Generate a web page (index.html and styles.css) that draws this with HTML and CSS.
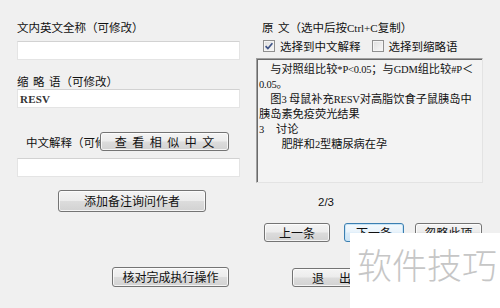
FILE: index.html
```html
<!DOCTYPE html>
<html>
<head>
<meta charset="utf-8">
<link rel="stylesheet" href="styles.css">
</head>
<body>
<div class="dialog">
  <div class="left">
    <div class="lbl lbl1">文内英文全称（可修改）</div>
    <div class="inp inp1"></div>
    <div class="lbl lbl2"><span class="gap">缩</span><span class="gap">略</span>语（可修改）</div>
    <div class="inp inp2"><span class="resv">RESV</span></div>
    <div class="row3">
      <div class="lbl lbl3">中文解释（可修改）</div>
      <button class="btn btn-similar"><span class="spaced">查看相似中文</span></button>
    </div>
    <div class="inp inp3"></div>
    <button class="btn btn-add">添加备注询问作者</button>
    <button class="btn btn-check">核对完成执行操作</button>
  </div>
  <div class="right">
    <div class="lbl title"><span class="gap">原</span>文（选中后按<span class="lat">Ctrl+C</span>复制）</div>
    <div class="checks">
      <span class="cb checked"><svg width="10" height="10" viewBox="0 0 10 10"><path d="M1.6 5.2 L3.9 7.6 L8.4 2.2" fill="none" stroke="#3f5487" stroke-width="1.7"/></svg></span>
      <span class="cbl">选择到中文解释</span>
      <span class="cb cb2"></span>
      <span class="cbl">选择到缩略语</span>
    </div>
    <div class="source">
      <div class="ln">　与对照组比较<span class="a">*P&lt;0.05</span>；与<span class="a">GDM</span>组比较<span class="a">#P</span>＜</div>
      <div class="ln"><span class="a">0.05</span>。</div>
      <div class="ln">　图<span class="a">3 </span>母鼠补充<span class="a">RESV</span>对高脂饮食子鼠胰岛中</div>
      <div class="ln">胰岛素免疫荧光结果</div>
      <div class="ln"><span class="a">3</span><span class="ind3"></span>讨论</div>
      <div class="ln">　　肥胖和<span class="a">2</span>型糖尿病在孕</div>
    </div>
    <div class="count">2/3</div>
    <div class="navrow">
      <button class="btn btn-prev">上一条</button>
      <button class="btn btn-next focus">下一条</button>
      <button class="btn btn-skip">忽略此项</button>
    </div>
    <button class="btn btn-exit"><span class="exitgap">退</span>出</button>
  </div>
  <div class="watermark">软件技巧</div>
</div>
</body>
</html>
```

FILE: styles.css
```css
html, body {
  margin: 0;
  padding: 0;
  background: #f0f0f0;
}
body {
  width: 500px;
  height: 308px;
  overflow: hidden;
  font-family: "Noto Sans CJK SC", "Noto Sans", sans-serif;
  font-size: 11.5px;
  color: #111;
}
.dialog {
  position: relative;
  display: grid;
  grid-template-columns: 255px 245px;
  width: 500px;
  height: 308px;
}
.lbl {
  line-height: 14px;
  height: 14px;
  white-space: nowrap;
}
.gap { margin-right: 4.5px; }
.lat { font-family: "Liberation Serif", serif; font-size: 11px; }

.left {
  display: flex;
  flex-direction: column;
  align-items: flex-start;
  padding-left: 17px;
}
.inp {
  box-sizing: border-box;
  width: 223px;
  height: 19px;
  background: #fff;
  border: 1px solid #e4e4e4;
  border-top-color: #d2d2d2;
}
.lbl1 { margin-top: 20px; }
.inp1 { margin-top: 7px; }
.lbl2 { margin-top: 14px; }
.inp2 { margin-top: 1px; padding: 1px 2px; line-height: 15px; }
.resv {
  font-family: "Liberation Serif", serif;
  font-size: 11px;
  font-weight: bold;
  letter-spacing: 0.2px;
  color: #333;
}
.row3 {
  display: flex;
  align-items: center;
  margin-top: 24px;
  height: 19px;
}
.lbl3 {
  width: 83px;
  padding-left: 9px;
  box-sizing: border-box;
  overflow: hidden;
}
.inp3 { margin-top: 7px; }

.btn {
  box-sizing: border-box;
  padding: 0;
  margin: 0;
  font-family: "Noto Sans CJK SC", "Noto Sans", sans-serif;
  font-size: 12px;
  line-height: 16px;
  color: #111;
  border: 1px solid #747474;
  border-radius: 3px;
  background: linear-gradient(#f4f4f4 0%, #ececec 48%, #dcdcdc 52%, #d2d2d2 100%);
  box-shadow: inset 0 0 0 1px rgba(255,255,255,0.75);
  text-align: center;
  white-space: nowrap;
}
.btn-similar { width: 129px; height: 19px; }
.spaced { letter-spacing: 5.5px; padding-left: 5.5px; }
.btn-add { width: 148px; height: 22px; margin-top: 13px; margin-left: 41px; }
.btn-check { width: 117px; height: 20px; margin-top: 55px; margin-left: 95px; }

.right {
  display: flex;
  flex-direction: column;
  align-items: flex-start;
}
.title { margin-top: 20px; padding-left: 7px; }
.checks {
  display: flex;
  align-items: center;
  margin-top: 5px;
  height: 14px;
  padding-left: 8px;
}
.cb {
  box-sizing: border-box;
  width: 12px;
  height: 12px;
  border: 1px solid #8f8f8f;
  background: linear-gradient(135deg, #dedede, #f8f8f8);
  box-shadow: inset 0 0 0 1px #f4f4f4;
  display: flex;
  align-items: center;
  justify-content: center;
}
.cbl { margin-left: 5px; line-height: 14px; }
.cb2 { margin-left: 11px; }
.source {
  box-sizing: border-box;
  margin-top: 5px;
  margin-left: 1px;
  width: 227px;
  height: 125px;
  background: #f3f3f3;
  border-top: 1px solid #a0a0a0;
  border-left: 1px solid #a0a0a0;
  border-right: 1px solid #e3e3e3;
  border-bottom: 1px solid #e3e3e3;
  box-shadow: inset 1px 1px 0 #6a6a6a;
  padding: 2px 0 0 2px;
  font-family: "Noto Sans CJK SC", sans-serif;
  font-size: 11.2px;
  overflow: hidden;
}
.a {
  font-family: "Liberation Serif", serif;
  font-size: 10.5px;
  letter-spacing: -0.2px;
}
.ln {
  line-height: 15px;
  height: 15px;
  white-space: nowrap;
}
.ind3 { display: inline-block; width: 12px; }
.count {
  margin-top: 12px;
  padding-left: 63px;
  line-height: 14px;
  font-family: "Liberation Sans", sans-serif;
  font-size: 11.5px;
}
.navrow {
  display: flex;
  margin-top: 14px;
  padding-left: 9px;
}
.navrow .btn { height: 19px; }
.btn-prev { width: 66px; }
.btn-next { width: 60px; margin-left: 14px; }
.btn-skip { width: 67px; margin-left: 11px; }
.focus {
  border-color: #3c7fb1;
  background: linear-gradient(#f3f9fd 0%, #e9f3fb 48%, #d9ebf8 52%, #cde4f5 100%);
  box-shadow: inset 0 0 0 1px #c8e4f6;
}
.btn-exit { width: 79px; height: 19px; margin-top: 26px; margin-left: 37px; }
.exitgap { margin-right: 15px; }

.watermark {
  position: absolute;
  left: 350px;
  top: 233px;
  width: 150px;
  height: 75px;
  background: #ffffff;
  box-sizing: border-box;
  padding: 8px 0 0 7px;
  font-family: "Noto Sans CJK SC", sans-serif;
  font-weight: 300;
  font-size: 35px;
  line-height: 45px;
  color: #c6c6c6;
  white-space: nowrap;
}
```
